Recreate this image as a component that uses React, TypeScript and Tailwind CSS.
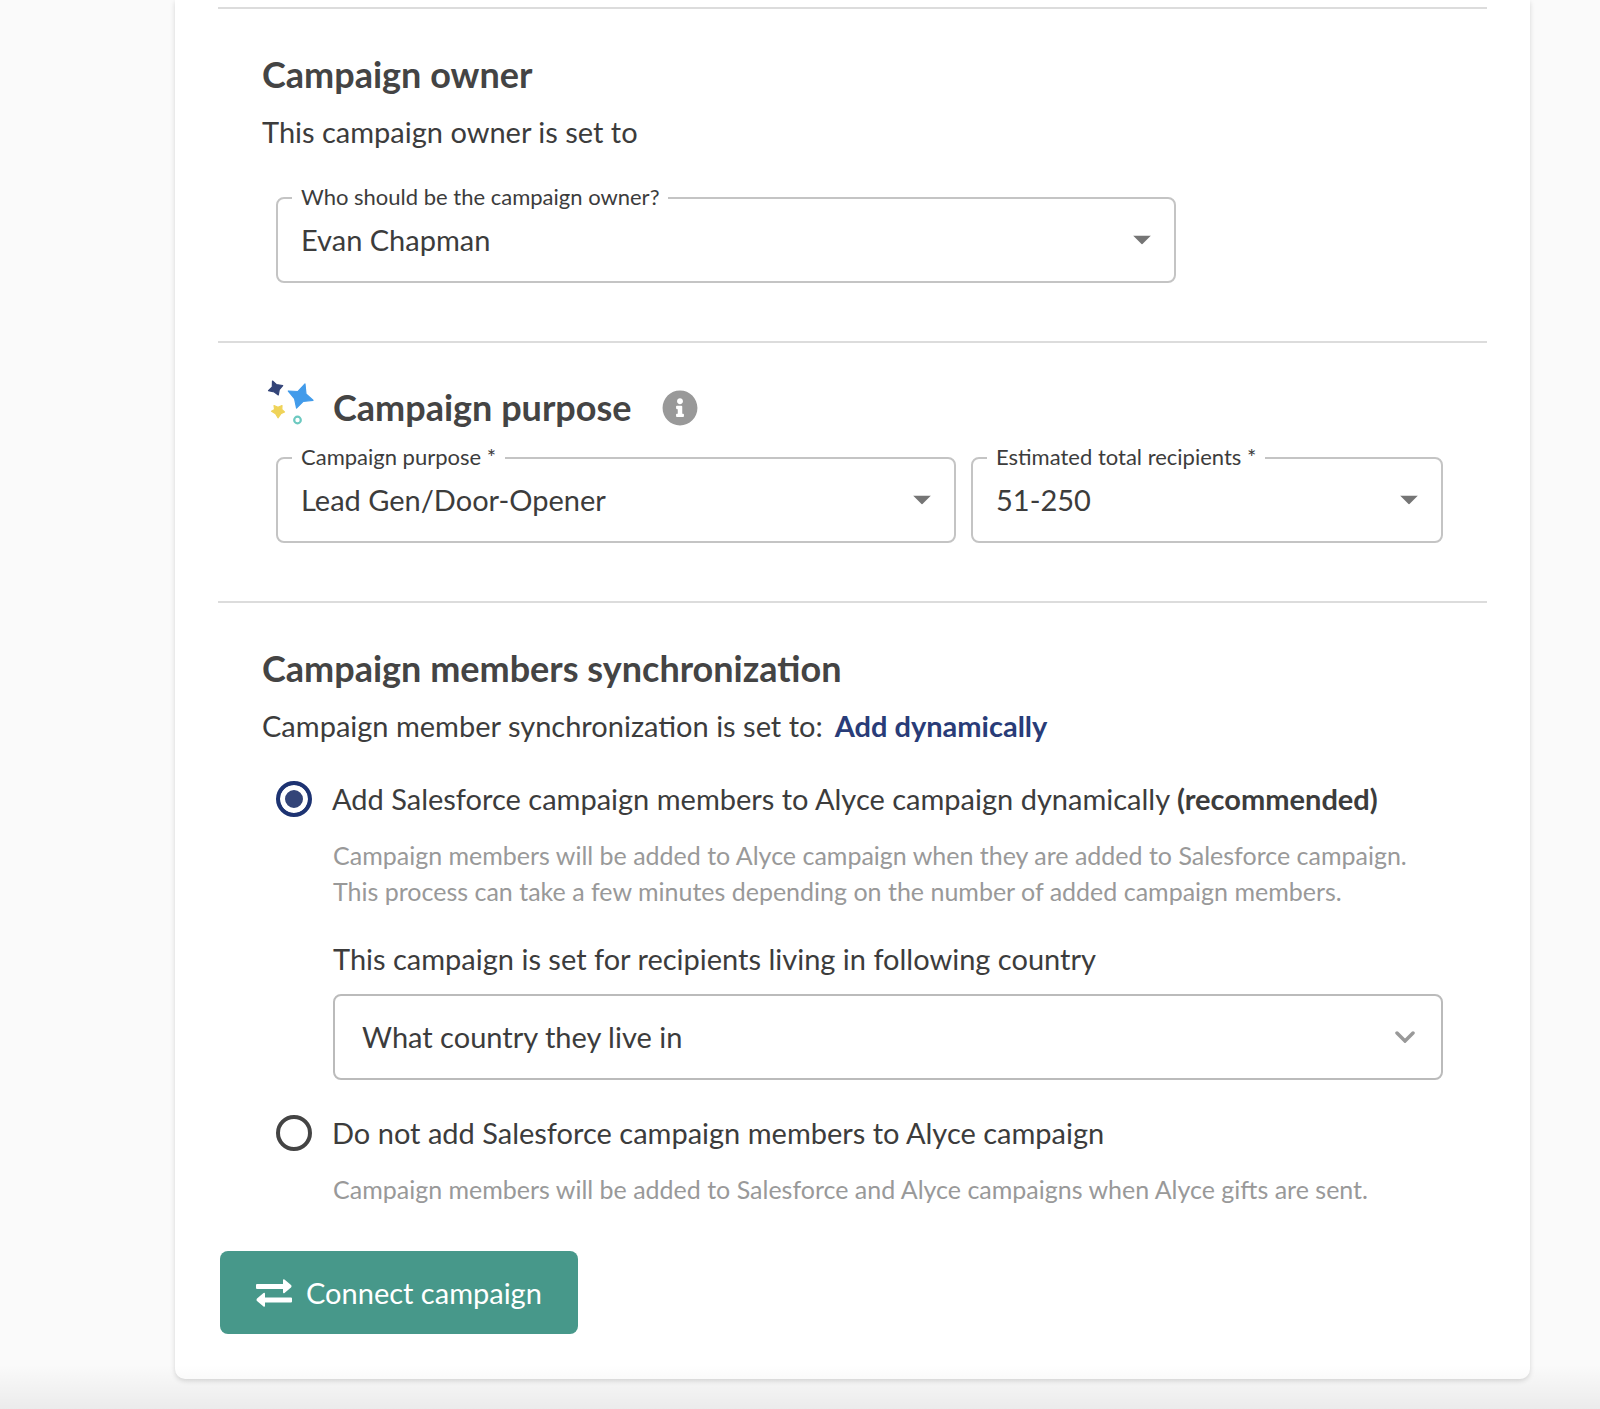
import { useState } from "react";
import type { ReactNode } from "react";
import { FaInfoCircle } from "react-icons/fa";

interface OutlinedSelectProps {
    id: string;
    label: string;
    options: string[];
    className?: string;
}

function OutlinedSelect({ id, label, options, className = "" }: OutlinedSelectProps) {
    const [value, setValue] = useState(options[0]);

    return (
        <div className={`relative ${className}`}>
            <label
                htmlFor={id}
                className="absolute left-4 top-0 -translate-y-1/2 bg-white px-[9px] text-[22px] leading-7 whitespace-nowrap"
            >
                {label}
            </label>
            <select
                id={id}
                value={value}
                onChange={(e) => setValue(e.target.value)}
                className="block w-full h-[86px] appearance-none rounded-lg border-2 border-[#c4c4c4] bg-white pl-[23px] pr-16 text-[29px] leading-9 outline-none"
            >
                {options.map((option) => (
                    <option key={option}>{option}</option>
                ))}
            </select>
            <svg
                viewBox="0 0 18 9"
                className="pointer-events-none absolute right-[25px] top-1/2 h-[9px] w-[18px] -translate-y-1/2 fill-[#757575]"
                aria-hidden="true"
            >
                <path d="M0 0h18L9 9z" />
            </svg>
        </div>
    );
}

interface SyncOptionProps {
    value: string;
    checked: boolean;
    onSelect: (value: string) => void;
    label: ReactNode;
    children: ReactNode;
}

function SyncOption({ value, checked, onSelect, label, children }: SyncOptionProps) {
    return (
        <div>
            <label className="flex items-center gap-5 text-[29px] leading-9">
                <input
                    type="radio"
                    name="sync"
                    value={value}
                    checked={checked}
                    onChange={() => onSelect(value)}
                    className="size-9 shrink-0 appearance-none rounded-full border-4 border-[#444] bg-white checked:border-[#1d3372] checked:bg-[#334478] checked:shadow-[inset_0_0_0_5px_white]"
                />
                <span>{label}</span>
            </label>
            <div className="pl-[57px]">{children}</div>
        </div>
    );
}

function StarsIcon() {
    return (
        <svg viewBox="0 0 48 48" className="size-12 shrink-0" aria-hidden="true">
            <g strokeLinejoin="round" strokeWidth="1.2">
                <path fill="#334478" stroke="#334478" d="M6.5 2 10.300 5.500 16.700 6.500 13.300 10.500 12.300 16 8.300 13 2.500 11.700 6.300 8z" />
                <path fill="#429bea" stroke="#429bea" d="M39 5 40 15 47 21.300 37 22.500 30.500 29 28.500 19.500 22.300 12 32 12.500z" />
                <path fill="#efd358" stroke="#efd358" d="M8 26.500 12 28.300 16 26.500 15.800 30.500 18.500 33 14.800 34.800 12 38.800 9.600 34.800 5.500 32.300 8.600 30.500z" />
            </g>
            <circle cx="31.500" cy="41" r="3.300" fill="none" stroke="#6cc9c0" strokeWidth="2.200" />
        </svg>
    );
}

function ExchangeIcon() {
    return (
        <svg viewBox="0 0 36 28" className="h-7 w-9 fill-white" aria-hidden="true">
            <path d="M1 5h26V1.500Q27-.5 28.500.5L35 6Q36 7 35 8.500L28.500 14Q27 15 27 13V10H1Q0 10 0 9V6Q0 5 1 5z" />
            <path d="M35 18.500H9V15Q9 13 7.500 14L1 19.500Q0 21 1 22L7.500 27.500Q9 28.500 9 26.500V23.500H35Q36 23.500 36 22.500V19.500Q36 18.500 35 18.500z" />
        </svg>
    );
}

export default function App() {
    const [sync, setSync] = useState("dynamic");
    const [country, setCountry] = useState("What country they live in");

    return (
        <div className="relative min-h-screen bg-[#fafafa] pb-[29px] pl-[175px] pr-[70px] font-['Lato',sans-serif] text-[#3c3c3c]">
            <main className="rounded-b-[10px] bg-white px-[43px] pb-[45px] pt-[7px] shadow-[0_2px_5px_rgba(0,0,0,0.15)]">
                <section className="border-t-2 border-[#dcdcdc] px-11 pb-[58px] pt-[43px]">
                    <h2 className="text-4xl leading-[44px] font-bold text-[#444]">Campaign owner</h2>
                    <p className="mt-[18px] text-[29px] leading-9">This campaign owner is set to</p>
                    <OutlinedSelect
                        id="owner"
                        label="Who should be the campaign owner?"
                        options={["Evan Chapman"]}
                        className="ml-[14px] mt-[47px] max-w-[900px]"
                    />
                </section>

                <section className="border-t-2 border-[#dcdcdc] px-11 pb-[58px] pt-9">
                    <div className="flex items-start pl-1">
                        <StarsIcon />
                        <h2 className="ml-[19px] mt-[6px] text-4xl leading-[44px] font-bold text-[#444]">Campaign purpose</h2>
                        <button type="button" aria-label="About campaign purpose" className="ml-[30px] mt-[11px]">
                            <FaInfoCircle className="size-9 text-[#999]" />
                        </button>
                    </div>
                    <div className="ml-[14px] mt-7 flex gap-[15px]">
                        <OutlinedSelect
                            id="purpose"
                            label="Campaign purpose *"
                            options={["Lead Gen/Door-Opener"]}
                            className="flex-[680]"
                        />
                        <OutlinedSelect
                            id="recipients"
                            label="Estimated total recipients *"
                            options={["51-250", "1-50", "251-500"]}
                            className="flex-[472]"
                        />
                    </div>
                </section>

                <section className="border-t-2 border-[#dcdcdc] px-11 pt-[43px]">
                    <h2 className="text-4xl leading-[44px] font-bold text-[#444]">Campaign members synchronization</h2>
                    <p className="mt-[18px] text-[29px] leading-9">
                        Campaign member synchronization is set to:
                        <strong className="ml-3 font-bold text-[#293c78]">Add dynamically</strong>
                    </p>

                    <div className="ml-[14px] mt-[37px]">
                        <SyncOption
                            value="dynamic"
                            checked={sync === "dynamic"}
                            onSelect={setSync}
                            label={<>Add Salesforce campaign members to Alyce campaign dynamically <strong>(recommended)</strong></>}
                        >
                            <p className="mt-5 text-[25px] leading-9 text-[#999]">
                                Campaign members will be added to Alyce campaign when they are added to Salesforce campaign.
                                This process can take a few minutes depending on the number of added campaign members.
                            </p>
                            <label htmlFor="country" className="mt-8 block text-[29px] leading-9">
                                This campaign is set for recipients living in following country
                            </label>
                            <div className="relative mt-[17px]">
                                <select
                                    id="country"
                                    value={country}
                                    onChange={(e) => setCountry(e.target.value)}
                                    className="block w-full h-[86px] appearance-none rounded-lg border-2 border-[#bbb] bg-white pl-[27px] pr-16 text-[29px] leading-9 outline-none"
                                >
                                    <option>What country they live in</option>
                                </select>
                                <svg
                                    viewBox="0 0 20 12"
                                    className="pointer-events-none absolute right-7 top-1/2 h-3 w-5 -translate-y-1/2 fill-none stroke-[#999]"
                                    aria-hidden="true"
                                >
                                    <path d="M2 2l8 8 8-8" strokeWidth="3.5" strokeLinecap="round" />
                                </svg>
                            </div>
                        </SyncOption>
                        <div className="mt-[35px]">
                            <SyncOption
                                value="none"
                                checked={sync === "none"}
                                onSelect={setSync}
                                label="Do not add Salesforce campaign members to Alyce campaign"
                            >
                                <p className="mt-5 text-[25px] leading-9 text-[#999]">
                                    Campaign members will be added to Salesforce and Alyce campaigns when Alyce gifts are sent.
                                </p>
                            </SyncOption>
                        </div>
                    </div>
                </section>

                <button
                    type="button"
                    className="ml-[2px] mt-11 flex h-[83px] items-center gap-[14px] rounded-lg bg-[#47988a] px-9 text-[29px] leading-9 text-white"
                >
                    <ExchangeIcon />
                    Connect campaign
                </button>
            </main>
            <div className="pointer-events-none absolute inset-x-0 bottom-0 h-11 bg-linear-to-b from-transparent to-black/6" />
        </div>
    );
}
